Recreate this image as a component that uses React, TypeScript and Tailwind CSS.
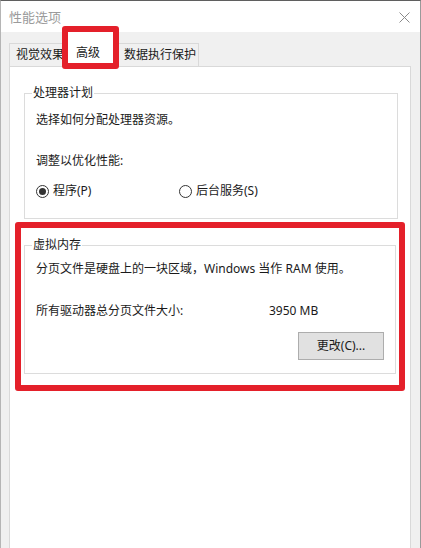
import React from "react";

const font = "font-['Noto_Sans','Noto_Sans_CJK_SC',sans-serif]";

function Radio({ checked, label }: { checked?: boolean; label: string }) {
  return (
    <div className="flex items-center">
      <span className="flex h-[13px] w-[13px] items-center justify-center rounded-full border border-[#333333] bg-white">
        {checked && <span className="h-[7px] w-[7px] rounded-full bg-[#333333]" />}
      </span>
      <span className="ml-[4px] leading-[16px]">{label}</span>
    </div>
  );
}

function Group({ title, children }: { title: string; children: React.ReactNode }) {
  return (
    <fieldset className="border border-[#dcdcdc] px-[11px]">
      <legend className="-ml-[4px] px-[1px] leading-[16px]">{title}</legend>
      {children}
    </fieldset>
  );
}

export default function App() {
  return (
    <div
      className={`${font} h-[548px] w-[421px] overflow-hidden border-t border-l border-r border-t-[#5f5f5f] border-l-[#b5b5b5] border-r-[#9a9a9a] bg-[#f0f0f0] text-[12px] text-[#1a1a1a]`}
    >
      {/* title bar */}
      <div className="flex h-[31px] items-center justify-between bg-white pl-[8px] pr-[10px]">
        <span className="text-[13px] leading-[16px] text-[#9b9b9b]">性能选项</span>
        <svg width="11" height="11" viewBox="0 0 11 11" className="mt-[1px]">
          <path d="M0.5 0.5 L10.5 10.5 M10.5 0.5 L0.5 10.5" stroke="#8a8a8a" strokeWidth="1" />
        </svg>
      </div>

      <div className="pl-[8px] pr-[9px] pt-[9px]">
        {/* tabs */}
        <div className="flex h-[25px] items-end">
          <div className="flex h-[23px] w-[55px] items-center whitespace-nowrap border border-b-0 border-[#d9d9d9] pl-[6px] leading-[16px]">
            视觉效果
          </div>
          <div className="relative z-10 -mb-px flex h-[26px] w-[53px] items-center bg-white pl-[12px] pb-[2px]">
            <span className="pointer-events-none absolute -top-[15px] -left-[2px] -right-[2px] -bottom-[2px] rounded-[3px] border-[6px] border-[#e4202a] bg-white" />
            <span className="relative leading-[16px]">高级</span>
          </div>
          <div className="flex h-[23px] w-[82px] items-center whitespace-nowrap border border-b-0 border-[#d9d9d9] pl-[6px] leading-[16px]">
            数据执行保护
          </div>
        </div>

        {/* panel */}
        <div className="h-[500px] border border-[#d9d9d9] bg-white px-[14px] pt-[18px]">
          <div className="mr-[-2px]">
            <Group title="处理器计划">
              <div className="pt-[11px] leading-[16px]">选择如何分配处理器资源。</div>
              <div className="mt-[25px] leading-[16px]">调整以优化性能:</div>
              <div className="mt-[14px] flex pb-[19px]">
                <div className="w-[143px]">
                  <Radio checked label="程序(P)" />
                </div>
                <Radio label="后台服务(S)" />
              </div>
            </Group>
          </div>

          <div className="mx-[-9px] mt-[3px] rounded-[3px] border-[6px] border-[#e4202a] px-[3px] pt-[9px] pb-[11px]">
            <Group title="虚拟内存">
              <div className="pt-[8px] leading-[16px]">分页文件是硬盘上的一块区域，Windows 当作 RAM 使用。</div>
              <div className="mt-[26px] flex leading-[16px]">
                <span className="w-[233px]">所有驱动器总分页文件大小:</span>
                <span>3950 MB</span>
              </div>
              <div className="mt-[13px] flex justify-end pb-[13px]">
                <button className="flex h-[28px] w-[86px] items-center justify-center border border-[#adadad] bg-[#e1e1e1] leading-[16px]">
                  更改(C)...
                </button>
              </div>
            </Group>
          </div>
        </div>
      </div>
    </div>
  );
}
